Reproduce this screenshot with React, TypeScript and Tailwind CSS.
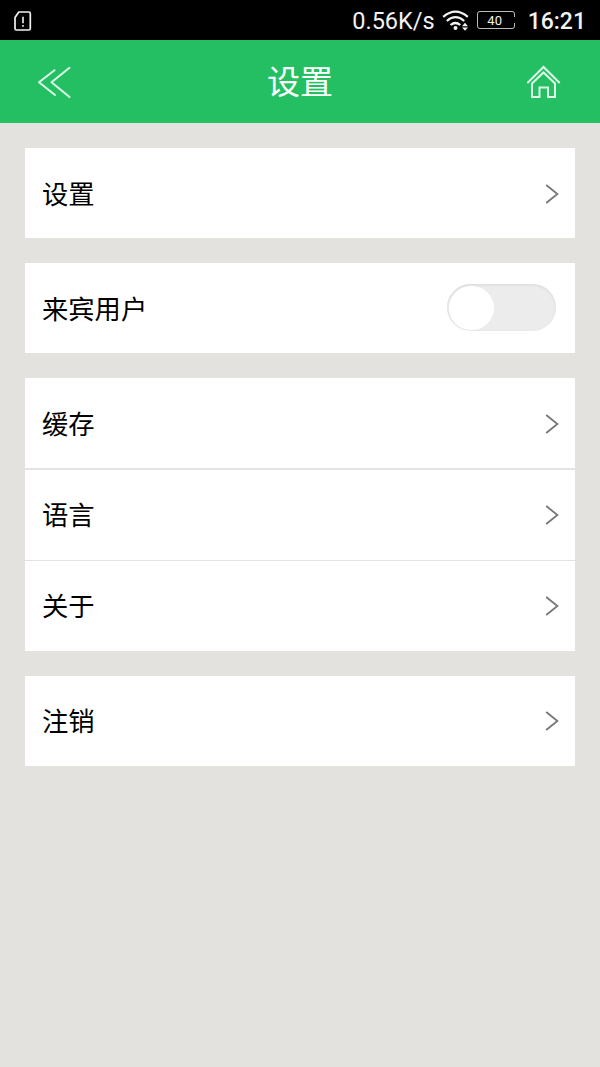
import { Fragment } from "react";

const groups = [["设置"], ["来宾用户"], ["缓存", "语言", "关于"], ["注销"]];

const StatusBar = () => {
  return (
    <div className="flex h-10 items-center bg-black pl-[14px] pr-[14px] font-['Roboto',sans-serif] text-[#f2f2f2]">
      <svg className="mt-[2px] h-[20px] w-[18px]" viewBox="0 0 18 20" fill="none" stroke="currentColor">
        <path d="M4.8 1H14.8Q16.3 1 16.3 2.5V17.5Q16.3 19 14.8 19H2.5Q1 19 1 17.5V6.5Z" strokeWidth="1.7" strokeLinejoin="round" />
        <path d="M9 5.8V12.2M9 14V15.8" strokeWidth="1.6" />
      </svg>
      <span className="ml-auto mt-[3px] text-[23.5px] leading-none">0.56K/s</span>
      <svg className="ml-[7px] mt-px h-[22px] w-[28px]" viewBox="0 0 28 22" fill="none" stroke="currentColor" strokeWidth="2.2">
        <path d="M1.2 6.8Q13.5 -3.6 25.8 6.8M4.8 11Q13.5 3.4 22.2 11M8.5 15Q13.5 11 18.3 15" />
        <circle cx="13.5" cy="18" r="2" fill="currentColor" stroke="none" />
        <path d="M23 12.8L26 16.2H20ZM23 20.7L26 17.4H20Z" fill="currentColor" stroke="none" />
      </svg>
      <div className="relative ml-[7px] flex h-[18px] w-[38px] items-center justify-center rounded-[3px] border border-[#bdbdbd]">
        <span className="mr-[2px] mt-px text-[13px] leading-none">40</span>
        <span className="absolute -right-px top-[5px] h-[6px] w-px bg-black" />
      </div>
      <span className="ml-[13px] mt-[3px] text-[23px] font-medium leading-none">16:21</span>
    </div>
  );
};

const Header = () => {
  return (
    <div className="flex h-[83.4px] items-center justify-between bg-[#23bf62] pl-[37px] pr-[39px] text-[#dcfce8]">
      <svg className="h-[34px] w-[34px]" viewBox="0 0 34 34" fill="none" stroke="currentColor" strokeWidth="2" strokeLinecap="round" strokeLinejoin="round">
        <path d="M17.5 5.2L2 17.2L18 30" />
        <path d="M32.5 2.8L14.5 17.2L32.5 32" />
      </svg>
      <h1 className="mb-[2px] ml-[2px] text-[33px] font-normal leading-none text-white">设置</h1>
      <svg className="h-[34px] w-[34px]" viewBox="0 0 34 34" fill="none" stroke="currentColor" strokeWidth="2">
        <path d="M0.3 18L16.5 2L32.7 18" />
        <path d="M5 18.5L16.5 7.5L28 18.5V32H21V22.5H12.5V32H5Z" />
      </svg>
    </div>
  );
};

const Toggle = () => {
  return (
    <div className="-mt-px mr-[3px] flex h-[47px] w-[109px] items-center rounded-full bg-[#ececec] p-[1.5px] shadow-[inset_0_1px_3px_#d8d8d8]">
      <div className="h-[44px] w-[45px] rounded-full bg-white" />
    </div>
  );
};

const Chevron = () => {
  return (
    <svg className="mt-px h-5 w-[14px]" viewBox="0 0 14 20" fill="none" stroke="#777" strokeWidth="1.8">
      <path d="M1.2 1L12.4 10L1.2 19" />
    </svg>
  );
};

const App = () => {
  return (
    <div className="min-h-[1067px] bg-[#e3e2de] font-['Noto_Sans_CJK_SC',sans-serif]">
      <StatusBar />
      <Header />
      <div className="flex flex-col gap-[25px] p-[25px]">
        {groups.map((rows) => (
          <div key={rows[0]} className="bg-white">
            {rows.map((label, i) => (
              <Fragment key={label}>
                {i > 0 && <div className="h-[1.25px] bg-[#e3e3e1]" />}
                <div className="flex h-[90px] items-center justify-between pl-[17px] pr-[16px]">
                  <span className="mb-[1px] text-[26.3px] leading-none text-black">{label}</span>
                  {label === "来宾用户" ? <Toggle /> : <Chevron />}
                </div>
              </Fragment>
            ))}
          </div>
        ))}
      </div>
    </div>
  );
};

export default App;
